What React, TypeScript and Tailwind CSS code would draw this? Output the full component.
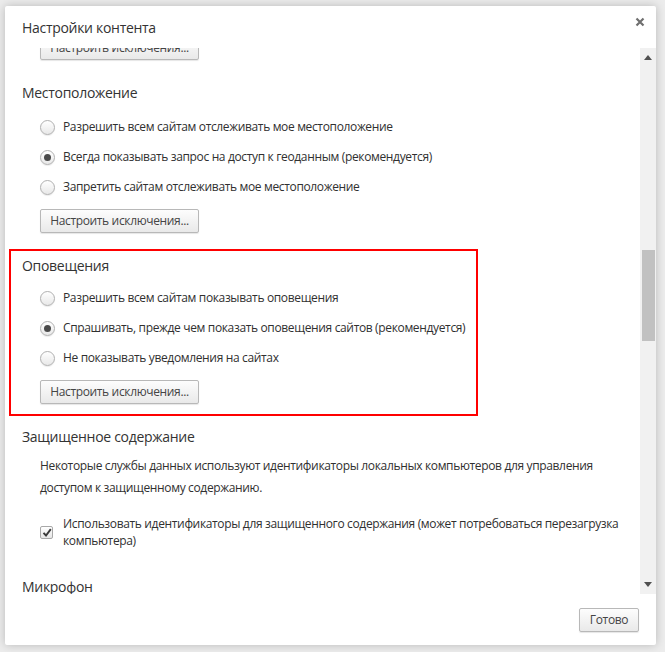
import React from 'react';

const font = { fontFamily: '"Open Sans", "Noto Sans", sans-serif' };

const Radio: React.FC<{ checked?: boolean; label: string }> = ({ checked, label }) => (
  <div className="flex h-[30px] items-center pl-[18px]">
    <span className="flex h-[15px] w-[15px] items-center justify-center rounded-full border border-[#b0b0b0] bg-gradient-to-b from-[#ffffff] to-[#e8e8e8] shadow-[0_1px_1px_rgba(0,0,0,0.08)]">
      {checked && <span className="h-[7px] w-[7px] rounded-full bg-[#4a4a4a]" />}
    </span>
    <span className="ml-[8px] whitespace-nowrap text-[12px] tracking-[-0.35px] text-[#303030]">{label}</span>
  </div>
);

const Btn: React.FC<{ label: string; className?: string }> = ({ label, className = '' }) => (
  <button
    className={
      'flex h-[24px] items-center justify-center rounded-[2px] border border-[#b8b8b8] bg-gradient-to-b from-[#fdfdfd] to-[#e9e9e9] text-[12px] tracking-[-0.35px] text-[#444] shadow-[0_1px_1px_rgba(0,0,0,0.1)] ' +
      className
    }
  >
    {label}
  </button>
);

const Heading: React.FC<{ children: React.ReactNode; className?: string }> = ({ children, className = '' }) => (
  <div className={'text-[14px] leading-[20px] tracking-[-0.3px] text-[#333] ' + className}>{children}</div>
);

export default function App() {
  return (
    <div className="h-[652px] w-[665px] overflow-hidden bg-[#ececec] pl-[5px] pt-[6px]" style={font}>
      <div className="flex h-[639px] w-[651px] flex-col rounded-[2px] bg-white shadow-[0_0_10px_rgba(0,0,0,0.22)]">
        {/* header */}
        <div className="relative h-[42px] shrink-0 pl-[17px] pt-[11px]">
          <Heading className="leading-[22px]">Настройки контента</Heading>
          <button className="absolute right-[9px] top-[9px] p-[2px]">
            <svg width="10" height="10" viewBox="0 0 10 10">
              <path d="M1.5 1.5 L8.5 8.5 M8.5 1.5 L1.5 8.5" stroke="#6f6f6f" strokeWidth="2.2" />
            </svg>
          </button>
        </div>

        {/* scroll area */}
        <div className="flex h-[546px] shrink-0">
          <div className="flex-1 overflow-hidden pl-[17px]">
            <div className="-mt-[12px]">
              <Btn label="Настроить исключения..." className="ml-[18px] w-[159px]" />

              <Heading className="mt-[23px]">Местоположение</Heading>
              <div className="mt-[9px]">
                <Radio label="Разрешить всем сайтам отслеживать мое местоположение" />
                <Radio checked label="Всегда показывать запрос на доступ к геоданным (рекомендуется)" />
                <Radio label="Запретить сайтам отслеживать мое местоположение" />
              </div>
              <Btn label="Настроить исключения..." className="ml-[18px] mt-[7px] w-[159px]" />

              <div className="-ml-[13px] mt-[16px] w-[469px] border-2 border-[#ff0000] pb-[10px] pl-[11px] pt-[5px]">
                <Heading>Оповещения</Heading>
                <div className="mt-[7px]">
                  <Radio label="Разрешить всем сайтам показывать оповещения" />
                  <Radio checked label="Спрашивать, прежде чем показать оповещения сайтов (рекомендуется)" />
                  <Radio label="Не показывать уведомления на сайтах" />
                </div>
                <Btn label="Настроить исключения..." className="ml-[18px] mt-[7px] w-[159px]" />
              </div>

              <Heading className="mt-[11px]">Защищенное содержание</Heading>
              <p className="mt-[8px] pl-[18px] pr-[30px] text-[12px] leading-[22px] tracking-[-0.35px] text-[#303030]">
                Некоторые службы данных используют идентификаторы локальных компьютеров для управления доступом к защищенному содержанию.
              </p>
              <div className="mt-[16px] flex items-center pl-[18px] pr-[10px]">
                <span className="flex h-[13px] w-[13px] shrink-0 items-center justify-center rounded-[2px] border border-[#a8a8a8] bg-gradient-to-b from-[#ffffff] to-[#e6e6e6]">
                  <svg width="10" height="9" viewBox="0 0 10 9">
                    <path d="M1.5 4.8 L4 7.5 L8.8 1.2" stroke="#3a3a3a" strokeWidth="1.9" fill="none" />
                  </svg>
                </span>
                <span className="ml-[10px] text-[12px] leading-[17px] tracking-[-0.35px] text-[#303030]">
                  Использовать идентификаторы для защищенного содержания (может потребоваться перезагрузка компьютера)
                </span>
              </div>

              <Heading className="mt-[28px] leading-[18px]">Микрофон</Heading>
            </div>
          </div>

          {/* scrollbar */}
          <div className="flex w-[16px] shrink-0 flex-col items-center bg-[#f1f1f1]">
            <div className="flex h-[17px] w-full items-center justify-center pt-[2px]">
              <svg width="8" height="5" viewBox="0 0 8 5">
                <path d="M0 5 L4 0 L8 5 Z" fill="#505050" />
              </svg>
            </div>
            <div className="mt-[185px] h-[91px] w-[13px] bg-[#c1c1c1]" />
            <div className="flex-1" />
            <div className="flex h-[17px] w-full items-center justify-center pb-[2px]">
              <svg width="8" height="5" viewBox="0 0 8 5">
                <path d="M0 0 L8 0 L4 5 Z" fill="#505050" />
              </svg>
            </div>
          </div>
        </div>

        {/* footer */}
        <div className="flex flex-1 justify-end pr-[17px] pt-[14px]">
          <Btn label="Готово" className="w-[60px]" />
        </div>
      </div>
    </div>
  );
}
